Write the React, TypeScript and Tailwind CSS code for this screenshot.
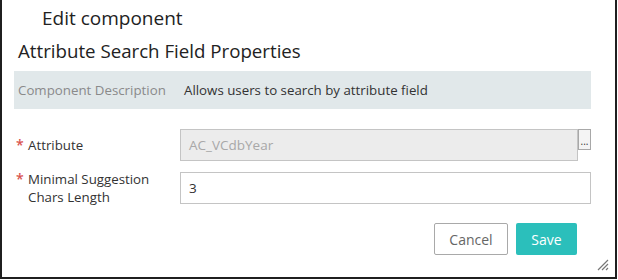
const font = { fontFamily: '"Open Sans", "Noto Sans", sans-serif' };

function Required({ children }: { children: React.ReactNode }) {
  return (
    <div className="w-[166px] flex items-start pl-[2px] text-[13.3px] leading-[18px] text-[#333]">
      <span className="w-[12px] text-[#d9534f] text-[14px] font-semibold">*</span>
      <span>{children}</span>
    </div>
  );
}

export default function App() {
  return (
    <div className="w-[618px] h-[280px] bg-white" style={font}>
      <div className="w-[617px] h-[279px] border-x-2 border-b-2 border-[#1f1f1f] flex flex-col relative">
        {/* ── Header ─────────────────────────── */}
        <div className="h-[36px] pl-[40px] flex items-center text-[19px] text-[#222]">
          Edit component
        </div>
        <div className="h-[30px] pl-[16px] flex items-center text-[18.7px] text-[#222]">
          Attribute Search Field Properties
        </div>

        {/* ── Description band ──────────────── */}
        <div className="mt-[5px] ml-[12px] w-[577px] h-[38px] bg-[#e1e8ea] flex items-center pl-[4px] pt-[2px] text-[13.3px]">
          <div className="w-[166px] text-[#8a8a8a]">Component Description</div>
          <div className="text-[#333]">Allows users to search by attribute field</div>
        </div>

        {/* ── Fields ────────────────────────── */}
        <div className="ml-[12px] mt-[20px] flex flex-col gap-[9px]">
          <div className="flex items-center">
            <Required>Attribute</Required>
            <div className="w-[398px] h-[32px] bg-[#ececec] border border-[#c4c4c4] flex items-center px-[8px] text-[13.5px] text-[#a8a8a8]">
              AC_VCdbYear
            </div>
            <div className="self-start w-[13px] h-[21px] bg-[#f4f4f4] border border-[#a8a8a8] flex items-end justify-center pb-[3px] text-[10px] leading-none text-[#333]">
              ...
            </div>
          </div>
          <div className="flex items-center">
            <Required>
              Minimal Suggestion
              <br />
              Chars Length
            </Required>
            <div className="w-[411px] h-[32px] bg-white border border-[#c4c4c4] flex items-center px-[8px] text-[13.5px] text-[#333]">
              3
            </div>
          </div>
        </div>

        {/* ── Actions ───────────────────────── */}
        <div className="mt-[17px] ml-[432px] flex gap-[8px]">
          <button className="w-[74px] h-[32px] border border-[#a9a9a9] rounded-[2px] bg-white text-[14px] text-[#666]">
            Cancel
          </button>
          <button className="w-[61px] h-[32px] rounded-[2px] bg-[#2bbfbb] text-[14px] text-white">
            Save
          </button>
        </div>

        <svg className="absolute right-[6px] bottom-[6px]" width="12" height="12" viewBox="0 0 12 12">
          <path d="M11 1 L1 11 M11 5 L5 11 M11 9 L9 11" stroke="#777" strokeWidth="1.2" />
        </svg>
      </div>
    </div>
  );
}
